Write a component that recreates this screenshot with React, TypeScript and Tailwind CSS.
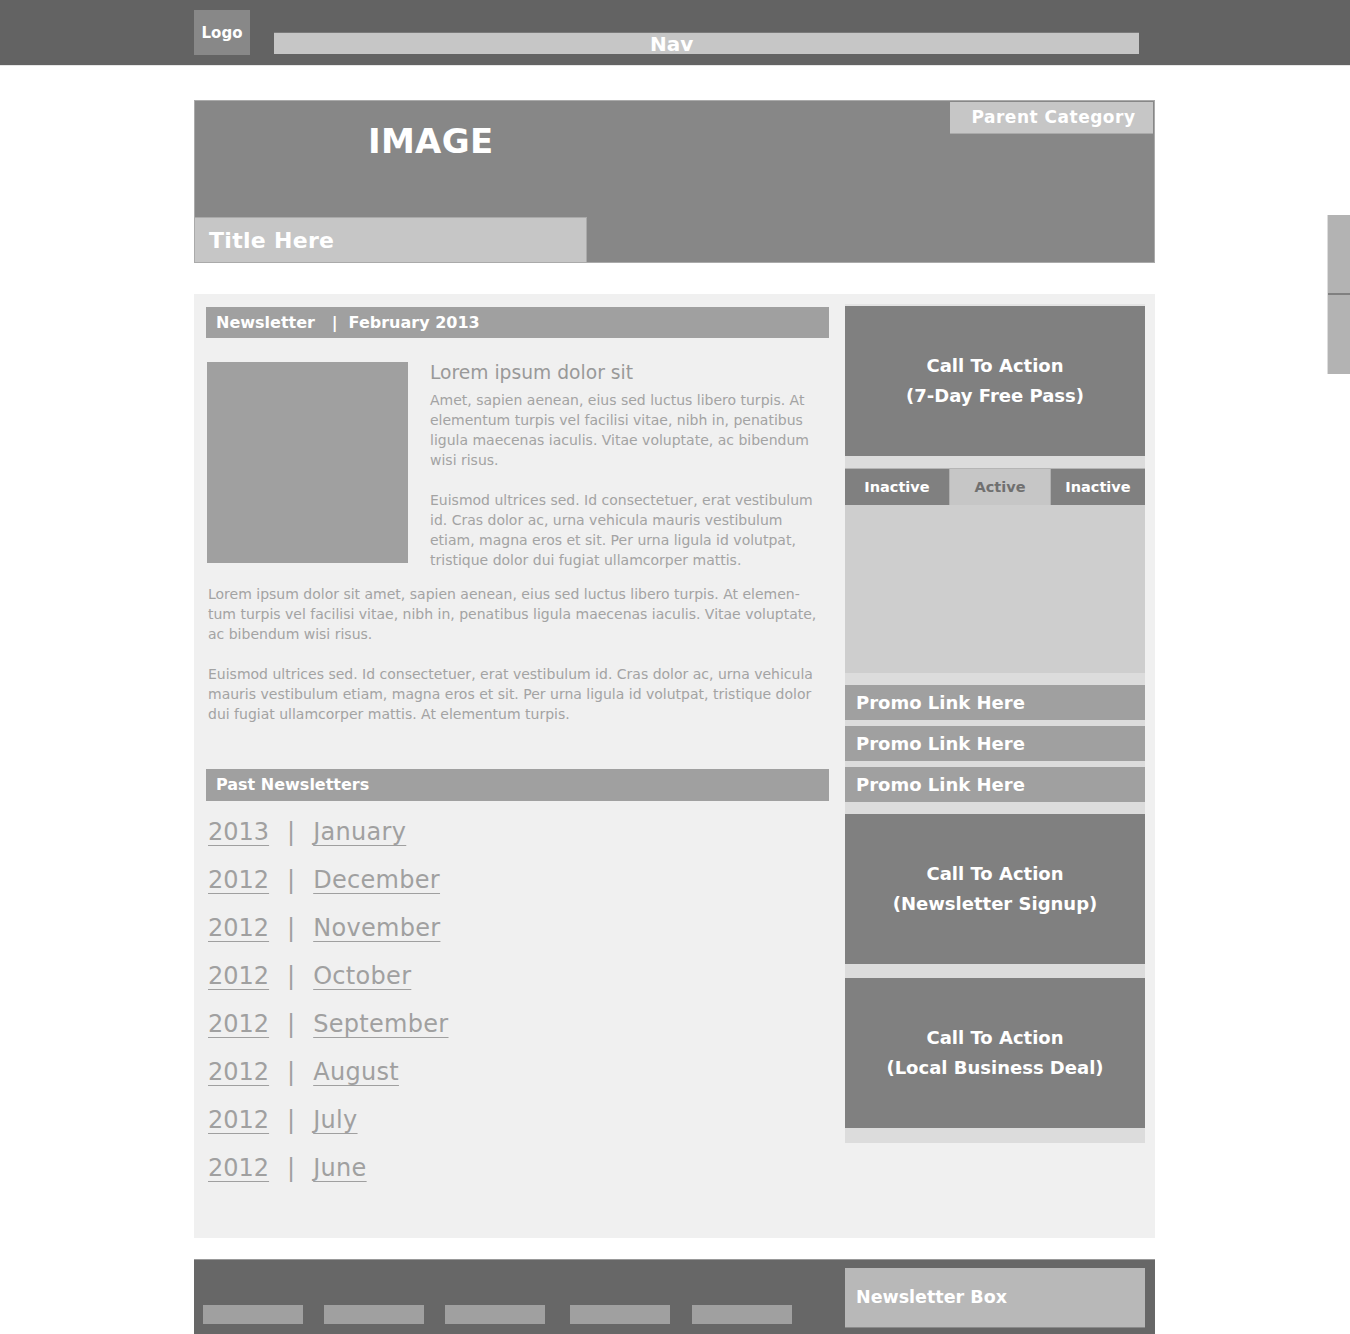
import React from "react";

const archive = [
  ["2013", "January"],
  ["2012", "December"],
  ["2012", "November"],
  ["2012", "October"],
  ["2012", "September"],
  ["2012", "August"],
  ["2012", "July"],
  ["2012", "June"],
];

function CallToAction({ lines }: { lines: string[] }) {
  return (
    <div className="h-[150px] bg-[#808080] flex flex-col items-center justify-center text-white font-bold text-[18px] leading-[30px]">
      {lines.map((l) => (
        <span key={l}>{l}</span>
      ))}
    </div>
  );
}

function PromoLink() {
  return (
    <div className="h-[35px] bg-[#a0a0a0] flex items-center pl-[11px] text-white font-bold text-[18px]">
      Promo Link Here
    </div>
  );
}

export default function App() {
  return (
    <div className="min-h-[1334px] bg-white font-['DejaVu_Sans',sans-serif] relative overflow-hidden">
      {/* header */}
      <div className="h-[66px] bg-[#636363] border-b border-[#e6e6e6] pr-px">
        <div className="w-[961px] mx-auto flex pt-[10px]">
          <div className="w-[56px] h-[45px] bg-[#888888] flex items-center justify-center text-white font-bold text-[15px] pt-[2px]">
            Logo
          </div>
          <div className="ml-[24px] mt-[22px] w-[865px] h-[22px] bg-[#c6c6c6] border-t border-[#7a7a7a] flex pl-[376px]">
            <span className="text-white font-bold text-[20px] leading-[22px]">Nav</span>
          </div>
        </div>
      </div>

      <div className="pr-px">
        <div className="w-[961px] mx-auto">
          {/* hero */}
          <div className="mt-[34px] h-[163px] bg-[#878787] border border-[#aaaaaa] flex flex-col">
            <div className="flex justify-between">
              <div className="pl-[173px] pt-[20px] text-white font-bold text-[34px] leading-[40px] tracking-[0.3px]">IMAGE</div>
              <div className="mt-[1px] mr-[1px] w-[203px] h-[32px] bg-[#c6c6c6] border-b border-[#aaaaaa] flex items-center justify-center text-white font-bold text-[17px] tracking-[0.5px] pl-[4px]">
                Parent Category
              </div>
            </div>
            <div className="mt-auto w-[392px] h-[45px] bg-[#c6c6c6] border-t border-r border-[#aaaaaa] flex items-center pl-[14px] text-white font-bold text-[22px] tracking-[0.3px]">
              Title Here
            </div>
          </div>

          {/* main */}
          <div className="mt-[31px] h-[944px] bg-[#f0f0f0] flex pl-[12px] pr-[10px]">
            <div className="w-[623px] pt-[13px]">
              <div className="h-[31px] bg-[#a0a0a0] flex items-center pl-[10px] text-white font-bold text-[16px] whitespace-pre">
                {"Newsletter   |  February 2013"}
              </div>

              <div className="flex mt-[24px]">
                <div className="w-[201px] h-[201px] bg-[#a0a0a0] ml-[1px]" />
                <div className="ml-[22px] text-[#a3a3a3] text-[14px] leading-[20px]">
                  <div className="text-[18.7px] leading-[22px] text-[#999999] mb-[6px]">Lorem ipsum dolor sit</div>
                  <p>
                    Amet, sapien aenean, eius sed luctus libero turpis. At<br />
                    elementum turpis vel facilisi vitae, nibh in, penatibus<br />
                    ligula maecenas iaculis. Vitae voluptate, ac bibendum<br />
                    wisi risus.
                  </p>
                  <p className="mt-[20px]">
                    Euismod ultrices sed. Id consectetuer, erat vestibulum<br />
                    id. Cras dolor ac, urna vehicula mauris vestibulum<br />
                    etiam, magna eros et sit. Per urna ligula id volutpat,<br />
                    tristique dolor dui fugiat ullamcorper mattis.
                  </p>
                </div>
              </div>

              <div className="mt-[14px] pl-[2px] text-[#a3a3a3] text-[14px] leading-[20px]">
                <p>
                  Lorem ipsum dolor sit amet, sapien aenean, eius sed luctus libero turpis. At elemen-<br />
                  tum turpis vel facilisi vitae, nibh in, penatibus ligula maecenas iaculis. Vitae voluptate,<br />
                  ac bibendum wisi risus.
                </p>
                <p className="mt-[20px]">
                  Euismod ultrices sed. Id consectetuer, erat vestibulum id. Cras dolor ac, urna vehicula<br />
                  mauris vestibulum etiam, magna eros et sit. Per urna ligula id volutpat, tristique dolor<br />
                  dui fugiat ullamcorper mattis. At elementum turpis.
                </p>
              </div>

              <div className="mt-[45px] h-[32px] bg-[#a0a0a0] flex items-center pl-[10px] text-white font-bold text-[16px]">
                Past Newsletters
              </div>

              <ul className="mt-[7px] pl-[2px]">
                {archive.map(([y, m], i) => (
                  <li key={i} className="h-[48px] flex items-center text-[24px] text-[#a0a0a0]">
                    <a className="underline underline-offset-[5px] decoration-1">{y}</a>
                    <span className="mx-[18px]">|</span>
                    <a className="underline underline-offset-[5px] decoration-1 tracking-[0.3px]">{m}</a>
                  </li>
                ))}
              </ul>
            </div>

            {/* sidebar */}
            <div className="ml-auto w-[300px] mt-[10px] h-[839px] bg-[#dcdcdc] border-t-2 border-[#e4e4e4] flex flex-col">
              <CallToAction lines={["Call To Action", "(7-Day Free Pass)"]} />
              <div className="mt-[12px] flex h-[37px] border-t border-[#b5b5b5] text-[14.5px] font-bold">
                <div className="w-[104px] bg-[#808080] text-white flex items-center justify-center pt-[2px]">Inactive</div>
                <div className="w-[102px] bg-[#c6c6c6] text-[#707070] flex items-center justify-center border-x border-[#b0b0b0] pt-[2px]">Active</div>
                <div className="flex-1 bg-[#808080] text-white flex items-center justify-center pt-[2px]">Inactive</div>
              </div>
              <div className="h-[168px] bg-[#cecece]" />
              <div className="mt-[12px] flex flex-col gap-[6px]">
                <PromoLink />
                <PromoLink />
                <PromoLink />
              </div>
              <div className="mt-[12px]">
                <CallToAction lines={["Call To Action", "(Newsletter Signup)"]} />
              </div>
              <div className="mt-[14px]">
                <CallToAction lines={["Call To Action", "(Local Business Deal)"]} />
              </div>
            </div>
          </div>

          {/* footer */}
          <div className="mt-[21px] h-[80px] bg-[#676767] border-t border-[#999999] flex items-start">
            <div className="flex mt-[45px] ml-[9px]">
              <div className="w-[100px] h-[19px] bg-[#a0a0a0]" />
              <div className="ml-[21px] w-[100px] h-[19px] bg-[#a0a0a0]" />
              <div className="ml-[21px] w-[100px] h-[19px] bg-[#a0a0a0]" />
              <div className="ml-[25px] w-[100px] h-[19px] bg-[#a0a0a0]" />
              <div className="ml-[22px] w-[100px] h-[19px] bg-[#a0a0a0]" />
            </div>
            <div className="ml-auto mr-[10px] mt-[8px] w-[300px] h-[60px] bg-[#b8b8b8] border-b border-[#8a8a8a] flex items-center pl-[11px] text-white font-bold text-[17.5px]">
              Newsletter Box
            </div>
          </div>
        </div>
      </div>

      {/* side feedback tab */}
      <div className="absolute right-0 top-[215px] w-[23px] h-[159px] bg-[#b3b3b3] border-l border-[#dddddd] flex flex-col">
        <div className="h-[80px] border-b-2 border-[#808080]" />
      </div>
    </div>
  );
}
